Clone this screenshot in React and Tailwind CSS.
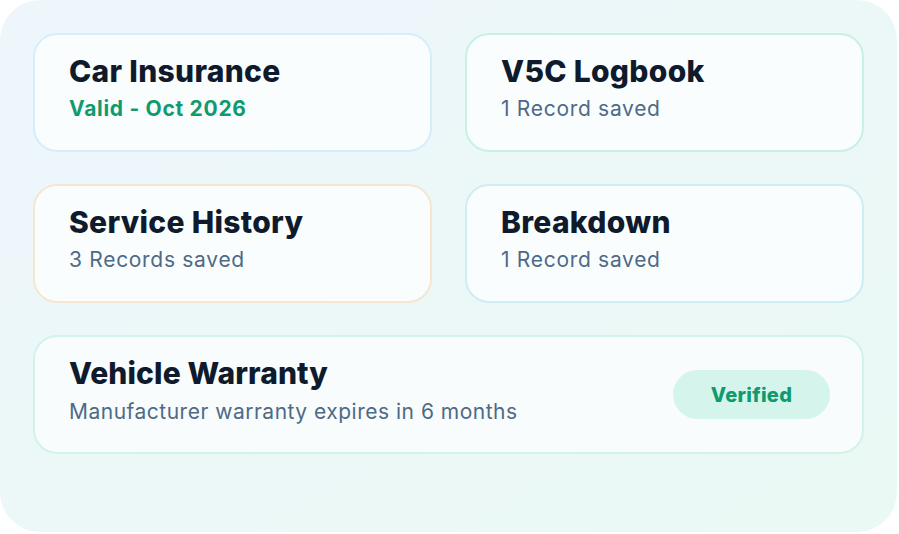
export default function App() {
  const cards = [
    { title: "Car Insurance", sub: "Valid - Oct 2026", subClass: "text-[#109a6f] font-bold", border: "border-[#d6eefa]" },
    { title: "V5C Logbook", sub: "1 Record saved", subClass: "text-[#4e6a86]", border: "border-[#c8f0e6]" },
    { title: "Service History", sub: "3 Records saved", subClass: "text-[#4e6a86]", border: "border-[#f6e6cf]" },
    { title: "Breakdown", sub: "1 Record saved", subClass: "text-[#4e6a86]", border: "border-[#cdeef4]" },
  ];
  return (
    <div className="w-[899px] h-[534px] bg-white font-['Inter',sans-serif]">
      <div className="w-[897px] h-[532px] rounded-[40px] bg-gradient-to-br from-[#eef6fc] to-[#eaf9f4] p-[33px] flex flex-col gap-[32px]">
        <div className="grid grid-cols-2 gap-x-[33px] gap-y-[32px]">
          {cards.map((c) => (
            <div
              key={c.title}
              className={`h-[119px] rounded-[24px] border-2 ${c.border} bg-[#f9fdfe] pl-[34px] pt-[16px]`}
            >
              <div className="text-[30px] leading-[40px] font-extrabold text-[#0f1b2d] tracking-[0.3px]">{c.title}</div>
              <div className={`text-[21px] leading-[28px] mt-[4px] tracking-[0.7px] ${c.subClass}`}>{c.sub}</div>
            </div>
          ))}
        </div>
        <div className="h-[119px] rounded-[24px] border-2 border-[#d2f3ea] bg-[#f8fcfc] pl-[34px] pr-[32px] pt-[16px] flex items-start justify-between">
          <div>
            <div className="text-[30px] leading-[40px] font-extrabold text-[#0f1b2d] tracking-[0.1px]">Vehicle Warranty</div>
            <div className="text-[21px] leading-[28px] mt-[5px] tracking-[0.5px] text-[#4e6a86]">Manufacturer warranty expires in 6 months</div>
          </div>
          <div className="mt-[17px] w-[157px] h-[49px] rounded-full bg-[#d5f5ec] flex items-center justify-center text-[20px] font-extrabold tracking-[0.3px] text-[#109a6f]">
            Verified
          </div>
        </div>
      </div>
    </div>
  );
}
